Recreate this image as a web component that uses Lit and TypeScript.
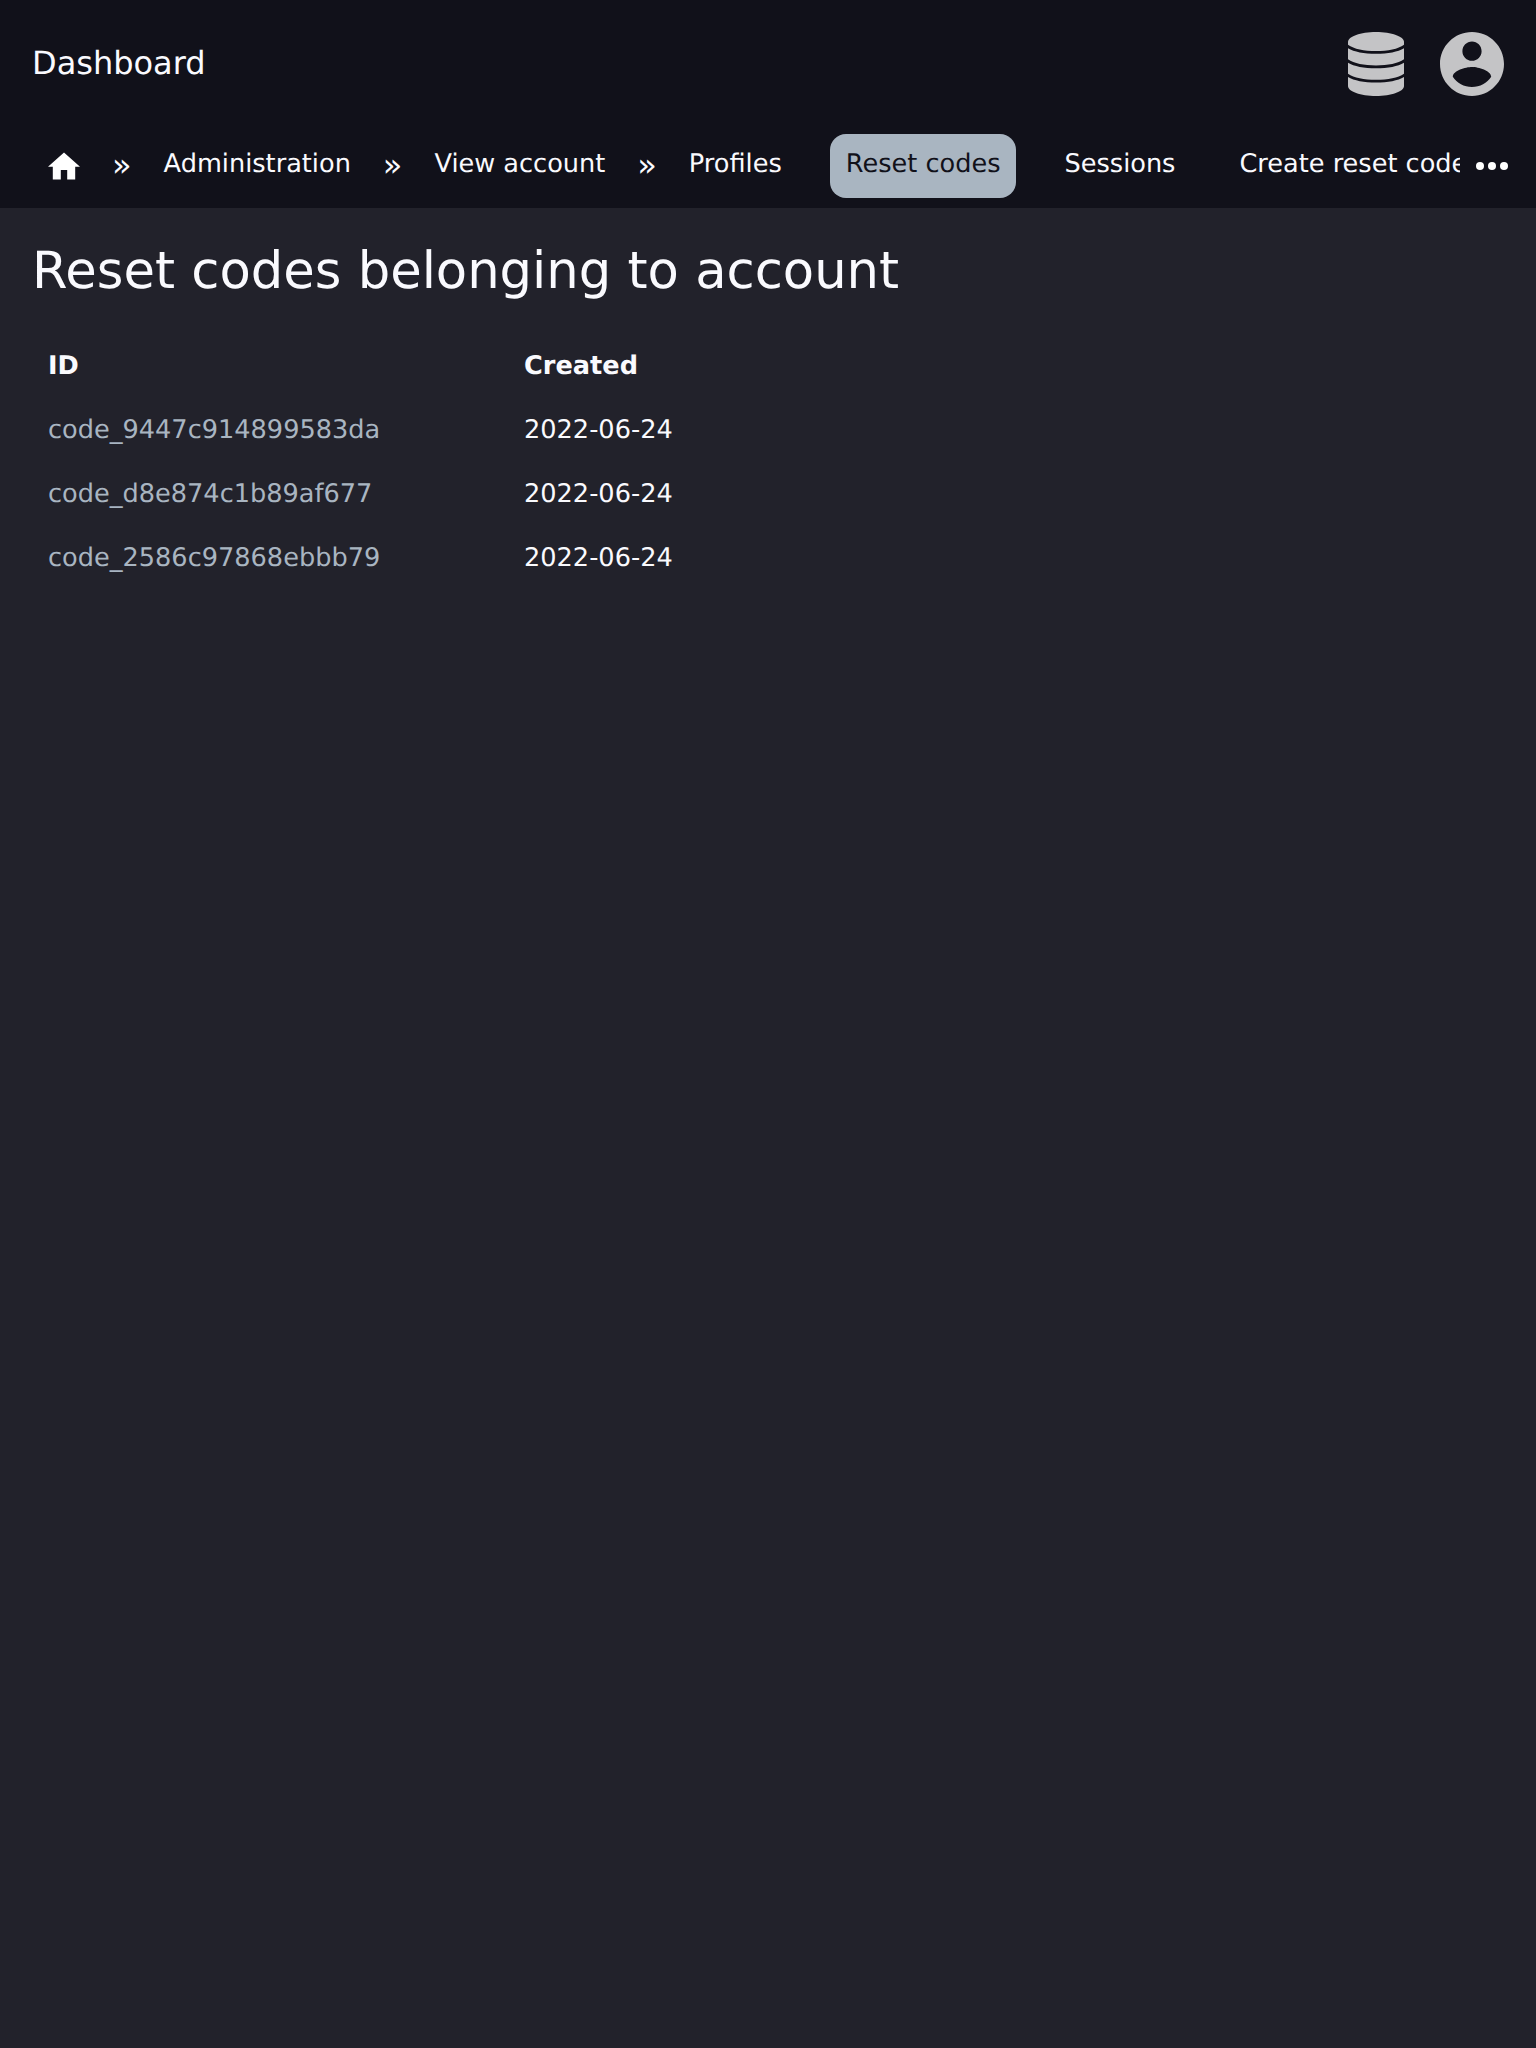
import { LitElement, html, css } from "lit";
import { customElement } from "lit/decorators.js";

const codes = ["code_9447c914899583da", "code_d8e874c1b89af677", "code_2586c97868ebbb79"];

@customElement("app-root")
class AppRoot extends LitElement {
  static styles = css`
    :host { display: block; min-height: 2048px; background: #22222b; color: #fafafe; font: 25.6px/32px "DejaVu Sans", sans-serif; text-rendering: geometricPrecision; }
    * { box-sizing: border-box; }
    header { height: 208px; background: #11111a; }
    .top { display: flex; align-items: center; height: 128px; padding: 0 32px; }
    .brand { flex: 1; font-size: 32px; padding-bottom: 2px; }
    .top svg { flex: none; height: 64px; fill: #c4c4c6; display: block; }
    .database { width: 56px; margin-right: 36px; }
    .account { width: 64px; }
    .nav { display: flex; height: 80px; padding: 6px 0 10px 32px; }
    .links { display: flex; width: 1428px; overflow: hidden; white-space: nowrap; }
    .link { flex: none; height: 64px; padding: 14px 16px; border-radius: 16px; }
    .link + .link { margin-left: 32px; }
    .active { background: #a9b5c1; color: #11111a; }
    .home { padding: 18px 16px; }
    .home svg { display: block; width: 32px; height: 28px; fill: #fff; }
    .more { flex: none; padding: 28px 16px; }
    .more svg { display: block; width: 32px; height: 8px; fill: #fff; }
    .sep { flex: none; font-size: 32px; padding: 15px 16px 0; }
    h1 { margin: 0; padding: 33px 32px 0; font-size: 51.2px; line-height: 60px; font-weight: 400; }
    .table { display: grid; grid-template-columns: 476px 1fr; padding: 33px 32px 0; }
    .cell { height: 64px; padding: 16px; }
    .head { font-weight: 700; }
    .id { color: #a9b5c1; }
  `;
  render() {
    return html`<header>
        <div class="top">
          <div class="brand">Dashboard</div>
          <svg class="database" viewBox="0 0 56 64"><path d="M28 0C12.500 0 0 4.500 0 10v2.700C6 17 16 19 28 19s22-2 28-6.300V10C56 4.500 43.500 0 28 0z"/><path d="M0 16.300C6 20 16 21.800 28 21.800s22-1.800 28-5.500v11c-6 4.200-16 6.100-28 6.100S6 31.500 0 27.300z"/><path d="M0 30.700c6 3.700 16 5.500 28 5.500s22-1.800 28-5.500v11c-6 4.200-16 6.100-28 6.100s-22-1.900-28-6.100z"/><path d="M0 45.100c6 3.700 16 5.500 28 5.500s22-1.800 28-5.500V54c0 5.500-12.500 10-28 10S0 59.500 0 54z"/></svg>
          <svg class="account" viewBox="2 2 20 20"><path d="M12 2C6.480 2 2 6.480 2 12s4.480 10 10 10 10-4.480 10-10S17.520 2 12 2zm0 3c1.660 0 3 1.340 3 3s-1.340 3-3 3-3-1.340-3-3 1.340-3 3-3zm0 14.200c-2.500 0-4.710-1.280-6-3.220.030-1.990 4-3.080 6-3.080 1.990 0 5.970 1.090 6 3.080-1.290 1.940-3.500 3.220-6 3.220z"/></svg>
        </div>
        <nav class="nav">
          <div class="links">
            <a class="link home"><svg viewBox="2 2.750 20 17.500"><path d="M10 20v-6h4v6h5v-8h3L12 3 2 12h3v8z"/></svg></a><span class="sep">»</span>
            <a class="link">Administration</a><span class="sep">»</span>
            <a class="link">View account</a><span class="sep">»</span>
            <a class="link">Profiles</a><a class="link active">Reset codes</a><a class="link">Sessions</a><a class="link">Create reset code</a>
          </div>
          <div class="more"><svg viewBox="0 0 32 8"><circle cx="4" cy="4" r="4"/><circle cx="16" cy="4" r="4"/><circle cx="28" cy="4" r="4"/></svg></div>
        </nav>
      </header>
      <h1>Reset codes belonging to account</h1>
      <div class="table"><div class="cell head">ID</div><div class="cell head">Created</div>
        ${codes.map((c) => html`<div class="cell id">${c}</div><div class="cell">2022-06-24</div>`)}
      </div>`;
  }
}
